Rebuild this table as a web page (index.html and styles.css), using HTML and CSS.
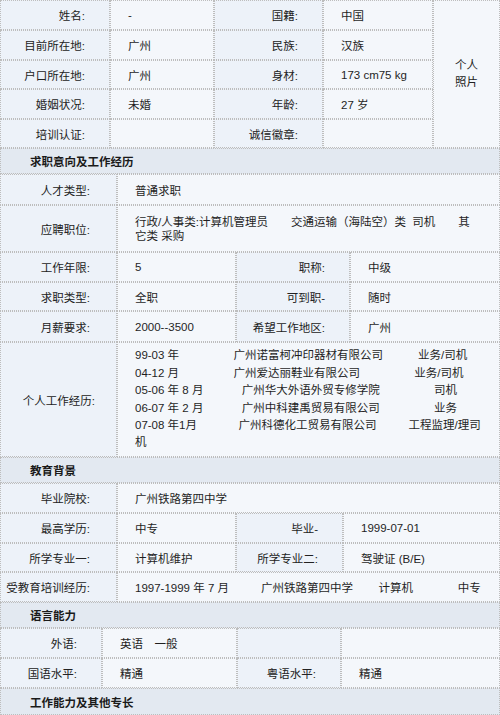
FILE: index.html
```html
<!DOCTYPE html>
<html lang="zh-CN">
<head>
<meta charset="utf-8">
<title>个人简历</title>
<link rel="stylesheet" href="styles.css">
</head>
<body>
<div class="resume">
  <div class="grid g-basic">
    <div class="c lab">姓名:</div>
    <div class="c val">-</div>
    <div class="c lab">国籍:</div>
    <div class="c val">中国</div>
    <div class="c photo">个人<br>照片</div>
    <div class="c lab">目前所在地:</div>
    <div class="c val">广州</div>
    <div class="c lab">民族:</div>
    <div class="c val">汉族</div>
    <div class="c lab">户口所在地:</div>
    <div class="c val">广州</div>
    <div class="c lab">身材:</div>
    <div class="c val">173 cm75 kg</div>
    <div class="c lab">婚姻状况:</div>
    <div class="c val">未婚</div>
    <div class="c lab">年龄:</div>
    <div class="c val">27 岁</div>
    <div class="c lab">培训认证:</div>
    <div class="c val"></div>
    <div class="c lab">诚信徽章:</div>
    <div class="c val"></div>
  </div>

  <div class="c hdr">求职意向及工作经历</div>

  <div class="grid g-job">
    <div class="c lab lab-wide">人才类型:</div>
    <div class="c val span3">普通求职</div>
    <div class="c lab lab-wide">应聘职位:</div>
    <div class="c val span3 wrap">行政/人事类:计算机管理员　　交通运输（海陆空）类&nbsp;&nbsp;司机　　其它类 采购</div>
    <div class="c lab lab-wide">工作年限:</div>
    <div class="c val">5</div>
    <div class="c lab">职称:</div>
    <div class="c val">中级</div>
    <div class="c lab lab-wide">求职类型:</div>
    <div class="c val">全职</div>
    <div class="c lab">可到职-</div>
    <div class="c val">随时</div>
    <div class="c lab lab-wide">月薪要求:</div>
    <div class="c val">2000--3500</div>
    <div class="c lab">希望工作地区:</div>
    <div class="c val">广州</div>
    <div class="c lab lab-hist">个人工作经历:</div>
    <div class="c val span3 history">
      <div class="line">99-03 年&nbsp;&nbsp;&nbsp;&nbsp;&nbsp;&nbsp;&nbsp;&nbsp;&nbsp;&nbsp;&nbsp;&nbsp;&nbsp;&nbsp;&nbsp;&nbsp;&nbsp;广州诺富柯冲印器材有限公司&nbsp;&nbsp;&nbsp;&nbsp;&nbsp;&nbsp;&nbsp;&nbsp;&nbsp;&nbsp;&nbsp;业务/司机</div>
      <div class="line">04-12 月&nbsp;&nbsp;&nbsp;&nbsp;&nbsp;&nbsp;&nbsp;&nbsp;&nbsp;&nbsp;&nbsp;&nbsp;&nbsp;&nbsp;&nbsp;&nbsp;&nbsp;广州爱达丽鞋业有限公司&nbsp;&nbsp;&nbsp;&nbsp;&nbsp;&nbsp;&nbsp;&nbsp;&nbsp;&nbsp;&nbsp;&nbsp;&nbsp;&nbsp;&nbsp;&nbsp;&nbsp;业务/司机</div>
      <div class="line">05-06 年 8 月&nbsp;&nbsp;&nbsp;&nbsp;&nbsp;&nbsp;&nbsp;&nbsp;&nbsp;&nbsp;&nbsp;&nbsp;广州华大外语外贸专修学院&nbsp;&nbsp;&nbsp;&nbsp;&nbsp;&nbsp;&nbsp;&nbsp;&nbsp;&nbsp;&nbsp;&nbsp;&nbsp;&nbsp;&nbsp;&nbsp;&nbsp;司机</div>
      <div class="line">06-07 年 2 月&nbsp;&nbsp;&nbsp;&nbsp;&nbsp;&nbsp;&nbsp;&nbsp;&nbsp;&nbsp;&nbsp;&nbsp;广州中科建禹贸易有限公司&nbsp;&nbsp;&nbsp;&nbsp;&nbsp;&nbsp;&nbsp;&nbsp;&nbsp;&nbsp;&nbsp;&nbsp;&nbsp;&nbsp;&nbsp;&nbsp;&nbsp;业务</div>
      <div class="line">07-08 年1月&nbsp;&nbsp;&nbsp;&nbsp;&nbsp;&nbsp;&nbsp;&nbsp;&nbsp;&nbsp;&nbsp;&nbsp;&nbsp;广州科德化工贸易有限公司&nbsp;&nbsp;&nbsp;&nbsp;&nbsp;&nbsp;&nbsp;&nbsp;&nbsp;&nbsp;工程监理/理司</div>
      <div class="line">机</div>
    </div>
  </div>

  <div class="c hdr">教育背景</div>

  <div class="grid g-edu">
    <div class="c lab lab-wide">毕业院校:</div>
    <div class="c val span3">广州铁路第四中学</div>
    <div class="c lab lab-wide">最高学历:</div>
    <div class="c val">中专</div>
    <div class="c lab">毕业-</div>
    <div class="c val">1999-07-01</div>
    <div class="c lab lab-wide">所学专业一:</div>
    <div class="c val">计算机维护</div>
    <div class="c lab">所学专业二:</div>
    <div class="c val">驾驶证 (B/E)</div>
    <div class="c lab lab-wide">受教育培训经历:</div>
    <div class="c val span3">1997-1999 年 7 月&nbsp;&nbsp;&nbsp;&nbsp;&nbsp;&nbsp;&nbsp;&nbsp;&nbsp;&nbsp;广州铁路第四中学&nbsp;&nbsp;&nbsp;&nbsp;&nbsp;&nbsp;&nbsp;&nbsp;计算机&nbsp;&nbsp;&nbsp;&nbsp;&nbsp;&nbsp;&nbsp;&nbsp;&nbsp;&nbsp;&nbsp;&nbsp;&nbsp;&nbsp;中专</div>
  </div>

  <div class="c hdr">语言能力</div>

  <div class="grid g-lang">
    <div class="c lab">外语:</div>
    <div class="c val">英语　一般</div>
    <div class="c lab"></div>
    <div class="c val"></div>
    <div class="c lab">国语水平:</div>
    <div class="c val">精通</div>
    <div class="c lab">粤语水平:</div>
    <div class="c val">精通</div>
  </div>

  <div class="c hdr hdr-last">工作能力及其他专长</div>
</div>
</body>
</html>
```

FILE: styles.css
```css
html, body {
  margin: 0;
  padding: 0;
  background: #ffffff;
}

body {
  font-family: "Liberation Sans", "Noto Sans CJK SC", sans-serif;
  font-size: 11.5px;
  color: #222222;
}

.resume {
  width: 500px;
}

.grid {
  display: grid;
}

.g-basic {
  grid-template-columns: 110px 104px 109px 110px 67px;
  grid-template-rows: 30px 30px 29px 30px 29px;
}

.g-job {
  grid-template-columns: 117px 119px 114px 150px;
  grid-template-rows: 31px 47px 30px 29px 31px 115px;
}

.g-edu {
  grid-template-columns: 117px 119px 107px 157px;
  grid-template-rows: 30px 30px 29px 30px;
}

.g-lang {
  grid-template-columns: 102px 135px 104px 159px;
  grid-template-rows: 30px 30px;
}

.c {
  box-sizing: border-box;
  border: 1px dotted #bdbdbd;
  display: flex;
  align-items: center;
  white-space: nowrap;
  min-width: 0;
}

.lab {
  background: #edf2f9;
  justify-content: flex-end;
  padding-right: 24px;
}

.lab-wide {
  padding-right: 26px;
}

.lab-hist {
  padding-right: 21px;
}

.val {
  background: #f4f7fb;
  justify-content: flex-start;
  padding-left: 17px;
  color: #1f1f1f;
}

.span3 {
  grid-column: span 3;
}

.wrap {
  white-space: normal;
  line-height: 14px;
  padding-right: 22px;
}

.history {
  flex-direction: column;
  align-items: flex-start;
  justify-content: center;
  line-height: 17.4px;
}

.photo {
  grid-row: span 5;
  background: #f4f7fb;
  justify-content: center;
  text-align: center;
  line-height: 17px;
}

.hdr {
  height: 26px;
  background: #e3e9f1;
  font-weight: bold;
  padding-left: 29px;
  color: #1a1a1a;
}

.hdr-last {
  height: 27px;
}
```
